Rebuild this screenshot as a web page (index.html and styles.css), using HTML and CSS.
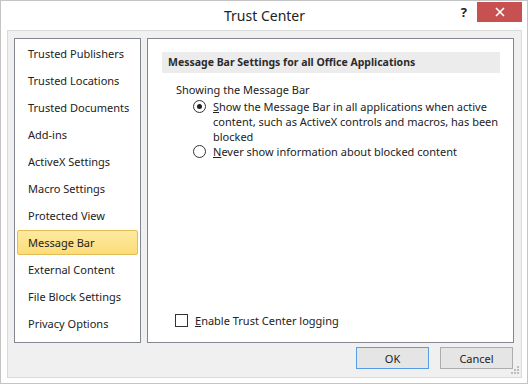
FILE: index.html
```html
<!DOCTYPE html>
<html lang="en">
<head>
  <meta charset="UTF-8" />
  <title>Trust Center</title>
  <link rel="stylesheet" href="styles.css">
</head>
<body>
  <div class="window">
    <div class="titlebar">
      <span class="title">Trust Center</span>
      <div class="caption">
        <span class="help">?</span>
        <span class="close">
          <svg width="10" height="10" viewBox="0 0 10 10"><path d="M1 1 L9 9 M9 1 L1 9" stroke="#fff" stroke-width="1.6"/></svg>
        </span>
      </div>
    </div>

    <div class="frame">
      <div class="panes">
        <ul class="nav">
          <li>Trusted Publishers</li>
          <li>Trusted Locations</li>
          <li>Trusted Documents</li>
          <li>Add-ins</li>
          <li>ActiveX Settings</li>
          <li>Macro Settings</li>
          <li>Protected View</li>
          <li class="selected">Message Bar</li>
          <li>External Content</li>
          <li>File Block Settings</li>
          <li>Privacy Options</li>
        </ul>

        <div class="content">
          <div class="section-head">Message Bar Settings for all Office Applications</div>
          <div class="group">
            <div class="group-label">Showing the Message Bar</div>
            <div class="option">
              <span class="radio checked"></span>
              <span class="option-text"><u>S</u>how the Message Bar in all applications when active content, such as ActiveX controls and macros, has been blocked</span>
            </div>
            <div class="option">
              <span class="radio"></span>
              <span class="option-text"><u>N</u>ever show information about blocked content</span>
            </div>
          </div>
          <div class="check-row">
            <span class="checkbox"></span>
            <span><u>E</u>nable Trust Center logging</span>
          </div>
        </div>
      </div>

      <div class="buttons">
        <button class="btn default">OK</button>
        <button class="btn">Cancel</button>
      </div>

      <svg class="grip" width="8" height="8" viewBox="0 0 8 8">
        <rect x="6" y="0" width="2" height="2" fill="#bdbdbd"/>
        <rect x="3" y="3" width="2" height="2" fill="#bdbdbd"/>
        <rect x="6" y="3" width="2" height="2" fill="#bdbdbd"/>
        <rect x="0" y="6" width="2" height="2" fill="#bdbdbd"/>
        <rect x="3" y="6" width="2" height="2" fill="#bdbdbd"/>
        <rect x="6" y="6" width="2" height="2" fill="#bdbdbd"/>
      </svg>
    </div>
  </div>
</body>
</html>
```

FILE: styles.css
```css
body {
  margin: 0;
  font-family: 'Noto Sans', sans-serif;
  font-size: 11px;
  color: #222;
  background: #fff;
}
.window {
  box-sizing: border-box;
  width: 528px;
  height: 384px;
  border: 1px solid #c4c4c4;
  background: #fff;
  padding: 0 5px 5px 6px;
  display: flex;
  flex-direction: column;
}
.titlebar {
  position: relative;
  height: 29px;
  flex: none;
  text-align: center;
}
.title {
  display: inline-block;
  font-size: 14px;
  line-height: 30px;
  color: #222;
}
.caption {
  position: absolute;
  top: 1px;
  right: 0;
  display: flex;
  align-items: center;
}
.help {
  font-weight: bold;
  font-size: 13px;
  color: #222;
  margin-right: 10px;
  line-height: 20px;
}
.close {
  width: 45px;
  height: 20px;
  background: #c75050;
  display: flex;
  align-items: center;
  justify-content: center;
}
.frame {
  position: relative;
  box-sizing: border-box;
  height: 348px;
  border: 1px solid #dadada;
  background: #f0f0f0;
  padding: 7px 7px 8px 6px;
  display: flex;
  flex-direction: column;
}
.panes {
  display: flex;
  gap: 6px;
  height: 305px;
}
.nav {
  list-style: none;
  margin: 0;
  box-sizing: border-box;
  width: 127px;
  border: 1px solid #828790;
  background: #fff;
  padding: 2px 2px 0;
}
.nav li {
  box-sizing: border-box;
  height: 25px;
  line-height: 23px;
  margin-bottom: 2px;
  padding-left: 10px;
  border: 1px solid transparent;
  border-radius: 2px;
  white-space: nowrap;
}
.nav li.selected {
  border-color: #e2bd58;
  background: linear-gradient(#fdeaa0, #fcdc79);
}
.content {
  box-sizing: border-box;
  flex: 1;
  border: 1px solid #828790;
  background: #fff;
  padding: 13px 13px 14px 14px;
  display: flex;
  flex-direction: column;
}
.section-head {
  height: 21px;
  line-height: 21px;
  background: #ececec;
  padding-left: 6px;
  font-size: 10.5px;
  font-weight: bold;
  color: #2b2b2b;
}
.group {
  margin: 9px 0 0 14px;
  line-height: 15px;
}
.group-label {
  margin-bottom: 2px;
}
.option {
  display: flex;
  align-items: flex-start;
  gap: 7px;
  padding-left: 17px;
}
.option-text {
  width: 286px;
}
.radio {
  flex: none;
  box-sizing: border-box;
  width: 13px;
  height: 13px;
  margin-top: 1px;
  border: 1px solid #333;
  border-radius: 50%;
  background: #fff;
  display: flex;
  align-items: center;
  justify-content: center;
}
.radio.checked::after {
  content: "";
  width: 5px;
  height: 5px;
  border-radius: 50%;
  background: #222;
}
.check-row {
  margin-top: auto;
  margin-left: 13px;
  display: flex;
  align-items: center;
  gap: 7px;
  line-height: 15px;
}
.checkbox {
  box-sizing: border-box;
  width: 13px;
  height: 13px;
  border: 1px solid #333;
  background: #fff;
}
.buttons {
  display: flex;
  justify-content: flex-end;
  gap: 11px;
  margin-top: 4px;
  padding-right: 1px;
}
.btn {
  box-sizing: border-box;
  width: 73px;
  height: 22px;
  font-family: inherit;
  font-size: 11px;
  color: #222;
  border: 1px solid #adadad;
  background: #e5e5e5;
  padding: 0;
}
.btn.default {
  border-color: #569de5;
}
.grip {
  position: absolute;
  right: 2px;
  bottom: 3px;
}
```
